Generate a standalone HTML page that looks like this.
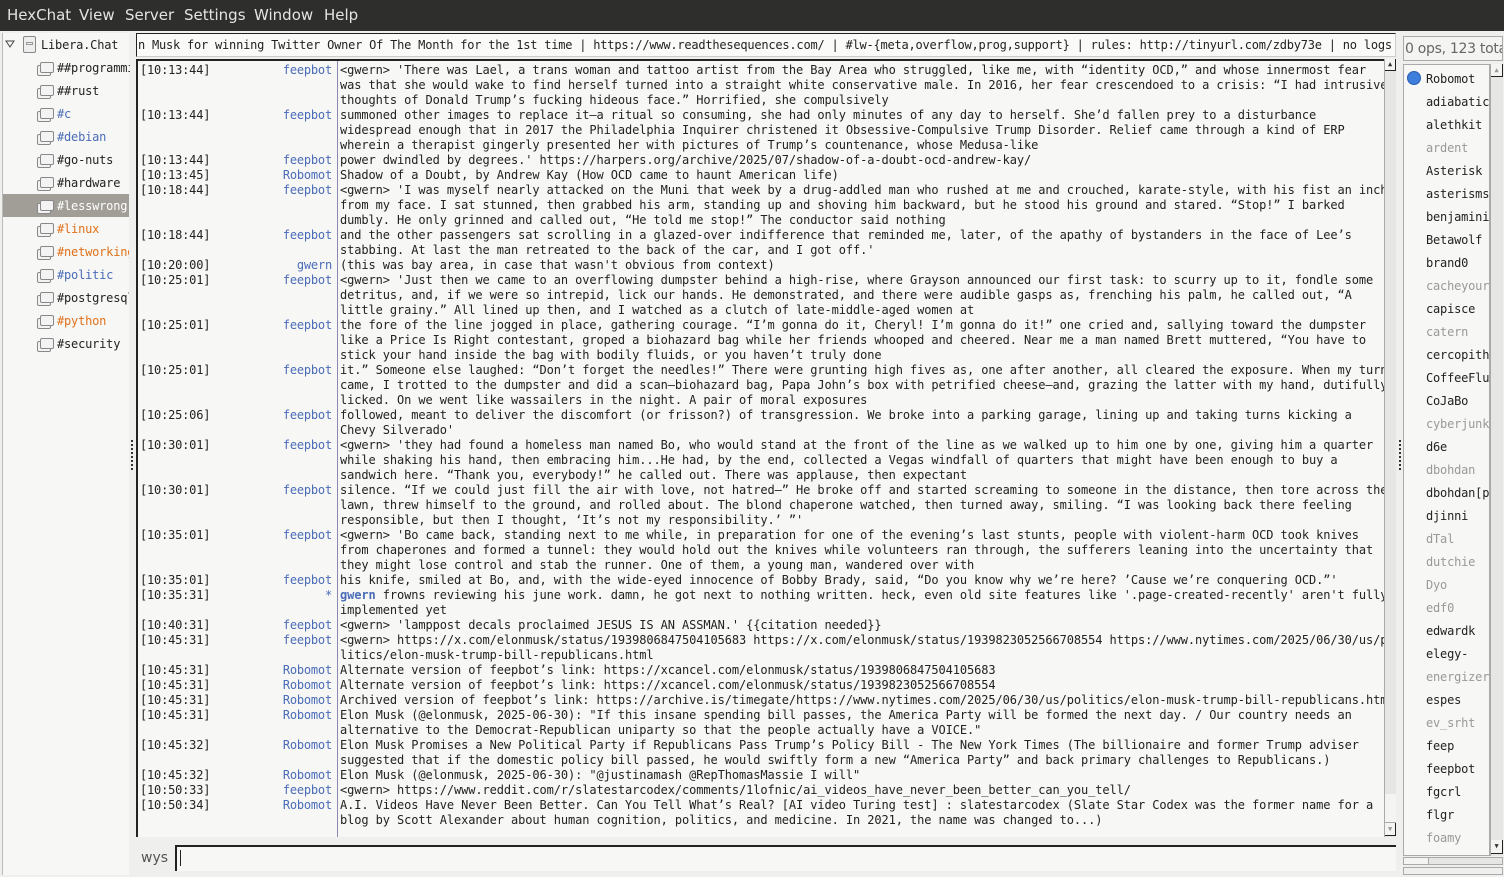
<!DOCTYPE html>
<html><head><meta charset="utf-8"><style>
*{margin:0;padding:0;box-sizing:border-box}
body{width:1504px;height:877px;background:#efefed;position:relative;overflow:hidden;font-family:"DejaVu Sans Mono","Liberation Mono",monospace;font-size:12px;letter-spacing:-0.2px;color:#222}
.menu{position:absolute;left:0;top:0;width:1504px;height:31px;background:#2e2e2c;color:#e4e4e2;font-family:"DejaVu Sans","Liberation Sans",sans-serif;font-size:15px;letter-spacing:0}
.menu span{position:absolute;top:6px}
.tree{position:absolute;left:2px;top:33px;width:127px;height:842px;background:#f7f7f5;border-left:1px solid #bbb}
.tree div{position:absolute;white-space:nowrap;overflow:hidden;height:22px;line-height:22px}
.ic{position:absolute;width:14px;height:11px;border:1px solid #888;border-radius:2px;background:#f3f3f3;box-shadow:-3px 3px 0 -1px #f3f3f3,-3px 3px 0 0 #888}
.topic{position:absolute;left:136px;top:33px;width:1260px;height:24px;background:#fafaf8;border:1px solid #222;border-right-color:#ccc;border-bottom-color:#ccc;white-space:nowrap;overflow:hidden;line-height:22px;padding-left:1px;letter-spacing:-0.22px}
.chat{position:absolute;left:136px;top:59px;width:1248px;height:778px;background:#f7f7f5;border-left:2px solid #222;border-top:2px solid #222;overflow:hidden}
.sep{position:absolute;left:199px;top:0;width:1px;height:778px;background:#8a8ab0}
.l{position:absolute;height:15px;line-height:15px;white-space:pre;top:0}
.ts{left:2px}.nk{width:194px;left:0;text-align:right;color:#4a6cb8}.tx{left:202px;letter-spacing:-0.1px}
.sb{position:absolute;left:1384px;top:59px;width:12px;height:778px;background:#e6e6e4;border-left:1px solid #aaa}
.ul{position:absolute;left:1403px;top:64px;width:87px;height:792px;background:#f7f7f5;border:1px solid #aaa;overflow:hidden}
.ul div{position:absolute;left:22px;height:18px;line-height:18px;white-space:nowrap}
.g{color:#999}
</style></head><body>
<div class="menu"><span style="left:7px">HexChat</span><span style="left:79px">View</span><span style="left:125px">Server</span><span style="left:184px">Settings</span><span style="left:254px">Window</span><span style="left:324px">Help</span></div>
<div class="tree">
<svg style="position:absolute;left:2px;top:6px" width="10" height="10"><path d="M1 2 L9 2 L5 8 Z" fill="none" stroke="#444"/></svg>
<div style="left:20px;top:3px;width:13px;height:17px;border:1px solid #888;border-radius:2px;background:#eee"><span style="position:absolute;left:2px;top:5px;width:7px;height:3px;border:1px solid #999"></span></div>
<div style="left:38px;top:1px">Libera.Chat</div>
<span class="ic" style="left:37px;top:29px"></span><div style="left:54px;top:24px;width:73px">##programming</div>
<span class="ic" style="left:37px;top:52px"></span><div style="left:54px;top:47px">##rust</div>
<span class="ic" style="left:37px;top:75px"></span><div style="left:54px;top:70px;color:#4a6cb8">#c</div>
<span class="ic" style="left:37px;top:98px"></span><div style="left:54px;top:93px;color:#4a6cb8">#debian</div>
<span class="ic" style="left:37px;top:121px"></span><div style="left:54px;top:116px">#go-nuts</div>
<span class="ic" style="left:37px;top:144px"></span><div style="left:54px;top:139px">#hardware</div>
<div style="left:0;top:161px;width:126px;height:23px;background:#a19e97"></div>
<span class="ic" style="left:37px;top:167px"></span><div style="left:54px;top:162px;color:#fff;width:72px">#lesswrong</div>
<span class="ic" style="left:37px;top:190px"></span><div style="left:54px;top:185px;color:#e0701a">#linux</div>
<span class="ic" style="left:37px;top:213px"></span><div style="left:54px;top:208px;color:#e0701a;width:72px">#networking</div>
<span class="ic" style="left:37px;top:236px"></span><div style="left:54px;top:231px;color:#4a6cb8">#politic</div>
<span class="ic" style="left:37px;top:259px"></span><div style="left:54px;top:254px;width:72px">#postgresql</div>
<span class="ic" style="left:37px;top:282px"></span><div style="left:54px;top:277px;color:#e0701a">#python</div>
<span class="ic" style="left:37px;top:305px"></span><div style="left:54px;top:300px">#security</div>
</div>
<div class="topic">n Musk for winning Twitter Owner Of The Month for the 1st time | https://www.readthesequences.com/ | #lw-{meta,overflow,prog,support} | rules: http://tinyurl.com/zdby73e | no logs</div>
<div class="chat"><div class="sep"></div>
<div class="l ts" style="top:2px">[10:13:44]</div><div class="l nk" style="top:2px">feepbot</div><div class="l tx" style="top:2px">&lt;gwern&gt; 'There was Lael, a trans woman and tattoo artist from the Bay Area who struggled, like me, with “identity OCD,” and whose innermost fear</div>
<div class="l tx" style="top:17px">was that she would wake to find herself turned into a straight white conservative male. In 2016, her fear crescendoed to a crisis: “I had intrusive</div>
<div class="l tx" style="top:32px">thoughts of Donald Trump’s fucking hideous face.” Horrified, she compulsively</div>
<div class="l ts" style="top:47px">[10:13:44]</div><div class="l nk" style="top:47px">feepbot</div><div class="l tx" style="top:47px">summoned other images to replace it—a ritual so consuming, she had only minutes of any day to herself. She’d fallen prey to a disturbance</div>
<div class="l tx" style="top:62px">widespread enough that in 2017 the Philadelphia Inquirer christened it Obsessive-Compulsive Trump Disorder. Relief came through a kind of ERP</div>
<div class="l tx" style="top:77px">wherein a therapist gingerly presented her with pictures of Trump’s countenance, whose Medusa-like</div>
<div class="l ts" style="top:92px">[10:13:44]</div><div class="l nk" style="top:92px">feepbot</div><div class="l tx" style="top:92px">power dwindled by degrees.' https://harpers.org/archive/2025/07/shadow-of-a-doubt-ocd-andrew-kay/</div>
<div class="l ts" style="top:107px">[10:13:45]</div><div class="l nk" style="top:107px">Robomot</div><div class="l tx" style="top:107px">Shadow of a Doubt, by Andrew Kay (How OCD came to haunt American life)</div>
<div class="l ts" style="top:122px">[10:18:44]</div><div class="l nk" style="top:122px">feepbot</div><div class="l tx" style="top:122px">&lt;gwern&gt; 'I was myself nearly attacked on the Muni that week by a drug-addled man who rushed at me and crouched, karate-style, with his fist an inch</div>
<div class="l tx" style="top:137px">from my face. I sat stunned, then grabbed his arm, standing up and shoving him backward, but he stood his ground and stared. “Stop!” I barked</div>
<div class="l tx" style="top:152px">dumbly. He only grinned and called out, “He told me stop!” The conductor said nothing</div>
<div class="l ts" style="top:167px">[10:18:44]</div><div class="l nk" style="top:167px">feepbot</div><div class="l tx" style="top:167px">and the other passengers sat scrolling in a glazed-over indifference that reminded me, later, of the apathy of bystanders in the face of Lee’s</div>
<div class="l tx" style="top:182px">stabbing. At last the man retreated to the back of the car, and I got off.'</div>
<div class="l ts" style="top:197px">[10:20:00]</div><div class="l nk" style="top:197px">gwern</div><div class="l tx" style="top:197px">(this was bay area, in case that wasn't obvious from context)</div>
<div class="l ts" style="top:212px">[10:25:01]</div><div class="l nk" style="top:212px">feepbot</div><div class="l tx" style="top:212px">&lt;gwern&gt; 'Just then we came to an overflowing dumpster behind a high-rise, where Grayson announced our first task: to scurry up to it, fondle some</div>
<div class="l tx" style="top:227px">detritus, and, if we were so intrepid, lick our hands. He demonstrated, and there were audible gasps as, frenching his palm, he called out, “A</div>
<div class="l tx" style="top:242px">little grainy.” All lined up then, and I watched as a clutch of late-middle-aged women at</div>
<div class="l ts" style="top:257px">[10:25:01]</div><div class="l nk" style="top:257px">feepbot</div><div class="l tx" style="top:257px">the fore of the line jogged in place, gathering courage. “I’m gonna do it, Cheryl! I’m gonna do it!” one cried and, sallying toward the dumpster</div>
<div class="l tx" style="top:272px">like a Price Is Right contestant, groped a biohazard bag while her friends whooped and cheered. Near me a man named Brett muttered, “You have to</div>
<div class="l tx" style="top:287px">stick your hand inside the bag with bodily fluids, or you haven’t truly done</div>
<div class="l ts" style="top:302px">[10:25:01]</div><div class="l nk" style="top:302px">feepbot</div><div class="l tx" style="top:302px">it.” Someone else laughed: “Don’t forget the needles!” There were grunting high fives as, one after another, all cleared the exposure. When my turn</div>
<div class="l tx" style="top:317px">came, I trotted to the dumpster and did a scan–biohazard bag, Papa John’s box with petrified cheese–and, grazing the latter with my hand, dutifully</div>
<div class="l tx" style="top:332px">licked. On we went like wassailers in the night. A pair of moral exposures</div>
<div class="l ts" style="top:347px">[10:25:06]</div><div class="l nk" style="top:347px">feepbot</div><div class="l tx" style="top:347px">followed, meant to deliver the discomfort (or frisson?) of transgression. We broke into a parking garage, lining up and taking turns kicking a</div>
<div class="l tx" style="top:362px">Chevy Silverado'</div>
<div class="l ts" style="top:377px">[10:30:01]</div><div class="l nk" style="top:377px">feepbot</div><div class="l tx" style="top:377px">&lt;gwern&gt; 'they had found a homeless man named Bo, who would stand at the front of the line as we walked up to him one by one, giving him a quarter</div>
<div class="l tx" style="top:392px">while shaking his hand, then embracing him...He had, by the end, collected a Vegas windfall of quarters that might have been enough to buy a</div>
<div class="l tx" style="top:407px">sandwich here. “Thank you, everybody!” he called out. There was applause, then expectant</div>
<div class="l ts" style="top:422px">[10:30:01]</div><div class="l nk" style="top:422px">feepbot</div><div class="l tx" style="top:422px">silence. “If we could just fill the air with love, not hatred—” He broke off and started screaming to someone in the distance, then tore across the</div>
<div class="l tx" style="top:437px">lawn, threw himself to the ground, and rolled about. The blond chaperone watched, then turned away, smiling. “I was looking back there feeling</div>
<div class="l tx" style="top:452px">responsible, but then I thought, ‘It’s not my responsibility.’ ”'</div>
<div class="l ts" style="top:467px">[10:35:01]</div><div class="l nk" style="top:467px">feepbot</div><div class="l tx" style="top:467px">&lt;gwern&gt; 'Bo came back, standing next to me while, in preparation for one of the evening’s last stunts, people with violent-harm OCD took knives</div>
<div class="l tx" style="top:482px">from chaperones and formed a tunnel: they would hold out the knives while volunteers ran through, the sufferers leaning into the uncertainty that</div>
<div class="l tx" style="top:497px">they might lose control and stab the runner. One of them, a young man, wandered over with</div>
<div class="l ts" style="top:512px">[10:35:01]</div><div class="l nk" style="top:512px">feepbot</div><div class="l tx" style="top:512px">his knife, smiled at Bo, and, with the wide-eyed innocence of Bobby Brady, said, “Do you know why we’re here? ’Cause we’re conquering OCD.”'</div>
<div class="l ts" style="top:527px">[10:35:31]</div><div class="l nk" style="top:527px">*</div><div class="l tx" style="top:527px"><b style="color:#4a6cb8">gwern</b> frowns reviewing his june work. damn, he got next to nothing written. heck, even old site features like '.page-created-recently' aren't fully</div>
<div class="l tx" style="top:542px">implemented yet</div>
<div class="l ts" style="top:557px">[10:40:31]</div><div class="l nk" style="top:557px">feepbot</div><div class="l tx" style="top:557px">&lt;gwern&gt; 'lamppost decals proclaimed JESUS IS AN ASSMAN.' {{citation needed}}</div>
<div class="l ts" style="top:572px">[10:45:31]</div><div class="l nk" style="top:572px">feepbot</div><div class="l tx" style="top:572px">&lt;gwern&gt; https://x.com/elonmusk/status/1939806847504105683 https://x.com/elonmusk/status/1939823052566708554 https://www.nytimes.com/2025/06/30/us/po</div>
<div class="l tx" style="top:587px">litics/elon-musk-trump-bill-republicans.html</div>
<div class="l ts" style="top:602px">[10:45:31]</div><div class="l nk" style="top:602px">Robomot</div><div class="l tx" style="top:602px">Alternate version of feepbot’s link: https://xcancel.com/elonmusk/status/1939806847504105683</div>
<div class="l ts" style="top:617px">[10:45:31]</div><div class="l nk" style="top:617px">Robomot</div><div class="l tx" style="top:617px">Alternate version of feepbot’s link: https://xcancel.com/elonmusk/status/1939823052566708554</div>
<div class="l ts" style="top:632px">[10:45:31]</div><div class="l nk" style="top:632px">Robomot</div><div class="l tx" style="top:632px">Archived version of feepbot’s link: https://archive.is/timegate/https://www.nytimes.com/2025/06/30/us/politics/elon-musk-trump-bill-republicans.html</div>
<div class="l ts" style="top:647px">[10:45:31]</div><div class="l nk" style="top:647px">Robomot</div><div class="l tx" style="top:647px">Elon Musk (@elonmusk, 2025-06-30): "If this insane spending bill passes, the America Party will be formed the next day. / Our country needs an</div>
<div class="l tx" style="top:662px">alternative to the Democrat-Republican uniparty so that the people actually have a VOICE."</div>
<div class="l ts" style="top:677px">[10:45:32]</div><div class="l nk" style="top:677px">Robomot</div><div class="l tx" style="top:677px">Elon Musk Promises a New Political Party if Republicans Pass Trump’s Policy Bill - The New York Times (The billionaire and former Trump adviser</div>
<div class="l tx" style="top:692px">suggested that if the domestic policy bill passed, he would swiftly form a new “America Party” and back primary challenges to Republicans.)</div>
<div class="l ts" style="top:707px">[10:45:32]</div><div class="l nk" style="top:707px">Robomot</div><div class="l tx" style="top:707px">Elon Musk (@elonmusk, 2025-06-30): "@justinamash @RepThomasMassie I will"</div>
<div class="l ts" style="top:722px">[10:50:33]</div><div class="l nk" style="top:722px">feepbot</div><div class="l tx" style="top:722px">&lt;gwern&gt; https://www.reddit.com/r/slatestarcodex/comments/1lofnic/ai_videos_have_never_been_better_can_you_tell/</div>
<div class="l ts" style="top:737px">[10:50:34]</div><div class="l nk" style="top:737px">Robomot</div><div class="l tx" style="top:737px">A.I. Videos Have Never Been Better. Can You Tell What’s Real? [AI video Turing test] : slatestarcodex (Slate Star Codex was the former name for a</div>
<div class="l tx" style="top:752px">blog by Scott Alexander about human cognition, politics, and medicine. In 2021, the name was changed to...)</div>
</div>
<div class="sb"><div style="position:absolute;top:0;left:0;width:11px;height:12px;background:#f4f4f2;border-right:1px solid #222;border-bottom:1px solid #222;font-size:7px;text-align:center;line-height:11px;color:#333">▲</div>
<div style="position:absolute;top:735px;left:0;width:11px;height:29px;background:#f4f4f2;border-bottom:1px solid #aaa"></div>
<div style="position:absolute;top:764px;left:0;width:11px;height:13px;background:#f4f4f2;border-right:1px solid #222;border-bottom:1px solid #222;font-size:7px;text-align:center;line-height:12px;color:#999">▼</div></div>
<div style="position:absolute;left:131px;top:440px;width:2px;height:30px;border-left:2px dotted #333"></div>
<div style="position:absolute;left:1399px;top:440px;width:2px;height:30px;border-left:2px dotted #333"></div>
<div style="position:absolute;left:141px;top:850px;font-family:'DejaVu Sans',sans-serif;font-size:14px;color:#555;letter-spacing:0">wys</div>
<div style="position:absolute;left:175px;top:845px;width:1221px;height:26px;background:#f7f7f5;border-left:2px solid #222;border-top:2px solid #222"><div style="position:absolute;left:3px;top:3px;width:1px;height:16px;background:#222"></div></div>
<div style="position:absolute;left:1403px;top:36px;width:100px;height:25px;border:1px solid #aaa;background:#f4f4f2;font-family:'DejaVu Sans',sans-serif;font-size:14px;letter-spacing:-0.3px;color:#666;line-height:24px;white-space:nowrap;overflow:hidden;padding-left:1px">0 ops, 123 total</div>
<div class="ul">
<span style="position:absolute;left:3px;top:6px;width:14px;height:14px;border-radius:50%;background:#3d7ddb;border:1px solid #2a5fb0"></span>
<div style="top:5px">Robomot</div><div style="top:28px">adiabatic</div><div style="top:51px">alethkit</div><div class="g" style="top:74px">ardent</div>
<div style="top:97px">Asterisk</div><div style="top:120px">asterisms</div><div style="top:143px">benjamini</div><div style="top:166px">Betawolf</div>
<div style="top:189px">brand0</div><div class="g" style="top:212px">cacheyour</div><div style="top:235px">capisce</div><div class="g" style="top:258px">catern</div>
<div style="top:281px">cercopith</div><div style="top:304px">CoffeeFlu</div><div style="top:327px">CoJaBo</div><div class="g" style="top:350px">cyberjunk</div>
<div style="top:373px">d6e</div><div class="g" style="top:396px">dbohdan</div><div style="top:419px">dbohdan[p</div><div style="top:442px">djinni</div>
<div class="g" style="top:465px">dTal</div><div class="g" style="top:488px">dutchie</div><div class="g" style="top:511px">Dyo</div><div class="g" style="top:534px">edf0</div>
<div style="top:557px">edwardk</div><div style="top:580px">elegy-</div><div class="g" style="top:603px">energizer</div><div style="top:626px">espes</div>
<div class="g" style="top:649px">ev_srht</div><div style="top:672px">feep</div><div style="top:695px">feepbot</div><div style="top:718px">fgcrl</div>
<div style="top:741px">flgr</div><div class="g" style="top:764px">foamy</div><div style="top:787px">fredroh</div>
</div>
<div style="position:absolute;left:1490px;top:64px;width:13px;height:792px;background:#e6e6e4;border-left:1px solid #aaa">
<div style="position:absolute;top:0;left:0;width:12px;height:13px;background:#f4f4f2;border-right:1px solid #222;border-bottom:1px solid #222;font-size:7px;text-align:center;line-height:12px;color:#999">▲</div>
<div style="position:absolute;top:776px;left:0;width:12px;height:14px;background:#f4f4f2;border-right:1px solid #222;border-bottom:1px solid #222;font-size:7px;text-align:center;line-height:13px;color:#333">▼</div></div>
<div style="position:absolute;left:1403px;top:857px;width:100px;height:8px;border:1px solid #aaa;background:#e6e6e4"><div style="width:25px;height:6px;background:#f4f4f2;border-right:1px solid #aaa"></div></div>
<div style="position:absolute;left:1403px;top:867px;width:100px;height:8px;border:1px solid #aaa;background:#efefed"></div>
</body></html>
